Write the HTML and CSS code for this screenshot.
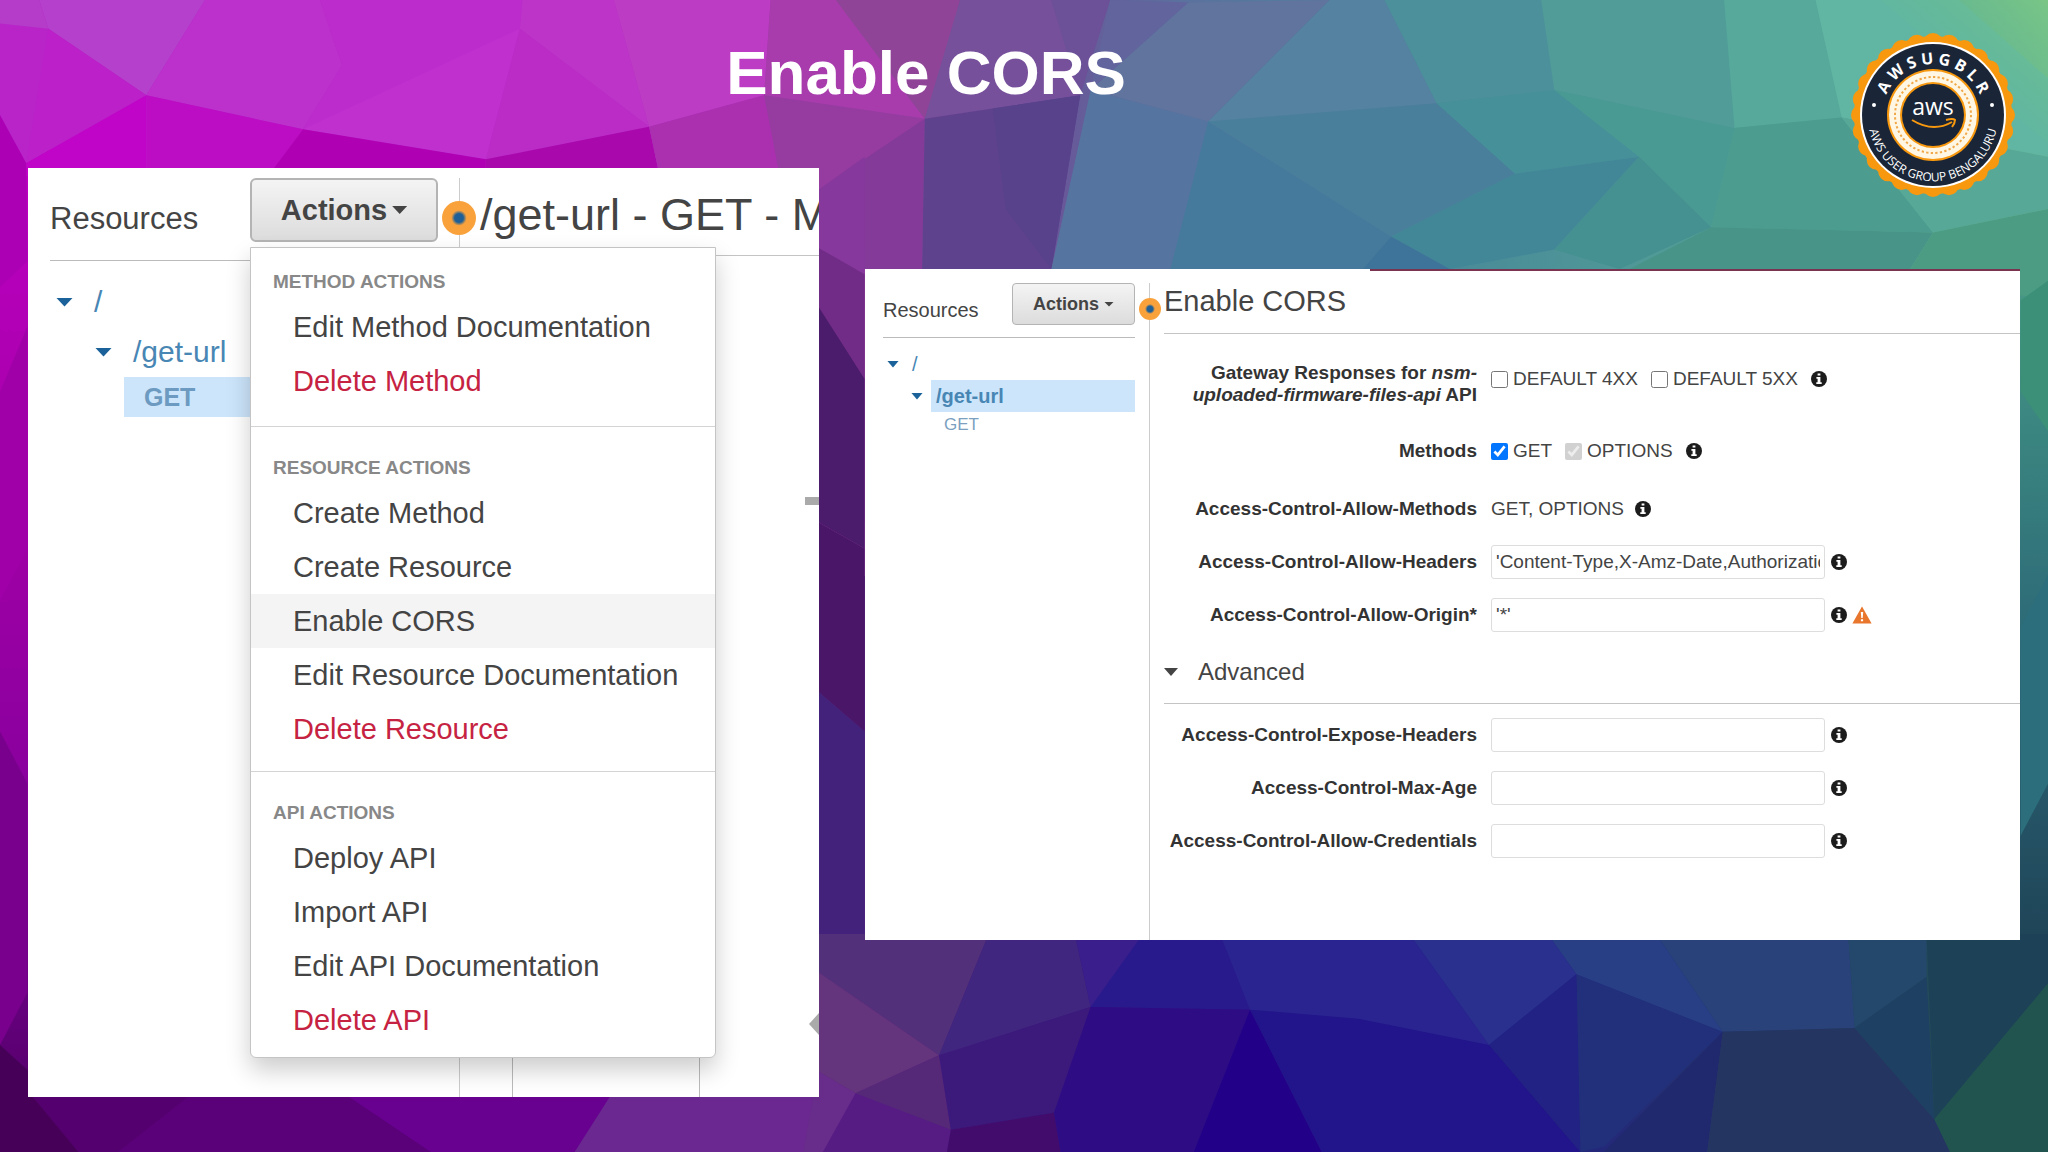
FILE: index.html
```html
<!DOCTYPE html>
<html lang="en">
<head>
    <meta charset="UTF-8">
    <meta name="viewport" content="width=device-width, initial-scale=1.0">
    <title>Enable CORS</title>
    <link rel="stylesheet" href="styles.css">
</head>
<body>
    <!-- Low poly backdrop -->
    <svg class="backdrop" viewBox="0 0 1568 882" preserveAspectRatio="none" aria-hidden="true">
        <defs>
            <linearGradient id="top" x1="0" x2="1" y1="0" y2="0">
                <stop offset="0" stop-color="#b520c8"/>
                <stop offset="0.3" stop-color="#b82cc4"/>
                <stop offset="0.42" stop-color="#9a40a4"/>
                <stop offset="0.5" stop-color="#6c5098"/>
                <stop offset="0.58" stop-color="#5a729e"/>
                <stop offset="0.72" stop-color="#4a8c98"/>
                <stop offset="0.9" stop-color="#56a896"/>
                <stop offset="1" stop-color="#6cbc8c"/>
            </linearGradient>
            <linearGradient id="bottom" x1="0" x2="1" y1="0" y2="0">
                <stop offset="0" stop-color="#46005e"/>
                <stop offset="0.2" stop-color="#66008e"/>
                <stop offset="0.38" stop-color="#6a2c8a"/>
                <stop offset="0.5" stop-color="#3c1880"/>
                <stop offset="0.7" stop-color="#24168c"/>
                <stop offset="0.9" stop-color="#24425f"/>
                <stop offset="1" stop-color="#205450"/>
            </linearGradient>
            <linearGradient id="left" x1="0" x2="0" y1="0" y2="1">
                <stop offset="0" stop-color="#c000c4"/>
                <stop offset="0.35" stop-color="#a400a8"/>
                <stop offset="0.7" stop-color="#86009c"/>
                <stop offset="1" stop-color="#52006a"/>
            </linearGradient>
            <linearGradient id="right" x1="0" x2="0" y1="0" y2="1">
                <stop offset="0" stop-color="#4e9f88"/>
                <stop offset="0.3" stop-color="#3a8480"/>
                <stop offset="0.6" stop-color="#2c6876"/>
                <stop offset="1" stop-color="#1f4458"/>
            </linearGradient>
            <linearGradient id="glow" x1="0" x2="1" y1="1" y2="0">
                <stop offset="0.3" stop-color="#5cb49c" stop-opacity="0"/>
                <stop offset="1" stop-color="#7cc884" stop-opacity="0.8"/>
            </linearGradient>
        </defs>
        <rect width="1568" height="441" fill="url(#top)"/>
        <rect y="441" width="1568" height="441" fill="url(#bottom)"/>
        <rect y="110" width="40" height="740" fill="url(#left)"/>
        <rect x="1530" y="170" width="38" height="550" fill="url(#right)"/>

        <!-- top left, magenta -->
        <polygon points="0,0 30,0 37,22 0,75" fill="#b43cc8"/>
        <polygon points="30,0 157,0 112,73 37,22" fill="#b440cc"/>
        <polygon points="0,18 37,22 112,73 20,125 0,88" fill="#b824c8"/>
        <polygon points="37,22 112,73 20,125" fill="#bc20c8"/>
        <polygon points="157,0 245,0 262,50 232,99 112,73" fill="#bc30cc"/>
        <polygon points="245,0 400,0 398,22 372,122 232,99 262,50" fill="#bc2ccc"/>
        <polygon points="398,22 372,122 232,99" fill="#bf30cf"/>
        <polygon points="400,0 470,0 497,97 398,22" fill="#bc34c8"/>
        <polygon points="398,22 497,97 372,122" fill="#bb2cc6"/>
        <polygon points="470,0 590,0 585,73 497,97" fill="#bc3cc4"/>
        <polygon points="112,73 20,125 10,135 112,135" fill="#c004c8"/>
        <polygon points="112,73 232,99 205,135 112,135" fill="#bc0cc4"/>
        <polygon points="232,99 372,122 372,135 205,135" fill="#b000b4"/>
        <polygon points="497,97 372,122 372,135 505,135" fill="#a808ac"/>
        <polygon points="497,97 585,73 600,135 505,135" fill="#aa30b0"/>
        <polygon points="0,88 20,125 21,200 0,220" fill="#ac00b4"/>
        <polygon points="0,300 21,250 21,420 0,460" fill="#a000a8"/>
        <polygon points="0,560 21,600 21,760 0,800" fill="#78008c"/>

        <!-- middle, violet to blue -->
        <polygon points="590,0 640,0 708,91 585,73" fill="#a83cac"/>
        <polygon points="640,0 735,0 722,60 708,91" fill="#904498"/>
        <polygon points="585,73 708,91 630,145 596,130" fill="#963ca0"/>
        <polygon points="735,0 805,0 827,73 708,91" fill="#76509a"/>
        <polygon points="805,0 850,0 827,73" fill="#6c5098"/>
        <polygon points="708,91 706,206 627,206 627,145" fill="#843a98"/>
        <polygon points="708,91 827,73 805,206 706,206" fill="#5e428e"/>
        <polygon points="760,83 827,73 805,206 770,160" fill="#58428c"/>
        <polygon points="850,0 910,2 835,69" fill="#62649e"/>
        <polygon points="910,2 1018,0 925,93 835,69" fill="#60749e"/>
        <polygon points="835,69 925,93 900,206 805,206" fill="#5674a0"/>
        <polygon points="925,93 1065,181 1040,210 895,210" fill="#467a9c"/>
        <polygon points="1018,0 1060,0 1100,79 1000,110 925,93" fill="#5482a0"/>
        <polygon points="925,93 1100,79 1160,133 1065,181" fill="#4a7f9c"/>

        <!-- top right, teal -->
        <polygon points="1060,0 1180,0 1190,69 1100,79" fill="#4c909c"/>
        <polygon points="1180,0 1320,0 1328,98 1190,69" fill="#519c99"/>
        <polygon points="1100,79 1190,69 1255,120 1160,133" fill="#46909a"/>
        <polygon points="1190,69 1328,98 1310,174 1255,120" fill="#4a9a94"/>
        <polygon points="1160,133 1255,120 1190,191 1110,206 1065,181" fill="#428798"/>
        <polygon points="1255,120 1310,174 1240,206 1190,191" fill="#459090"/>
        <polygon points="1065,181 1110,206 1040,210" fill="#3f749a"/>
        <polygon points="1320,0 1390,0 1410,90 1328,98" fill="#56a99b"/>
        <polygon points="1390,0 1500,0 1568,60 1568,120 1410,90" fill="#60b6a2"/>
        <polygon points="1440,0 1568,0 1568,110" fill="url(#glow)"/>
        <polygon points="1328,98 1410,90 1480,178 1310,174" fill="#4c9c90"/>
        <polygon points="1410,90 1568,120 1568,160 1480,178" fill="#58a898"/>
        <polygon points="1310,174 1480,178 1460,210 1240,210" fill="#489488"/>
        <polygon points="1480,178 1568,160 1568,230 1460,210" fill="#4c9c84"/>
        <polygon points="1547,230 1568,215 1568,330 1547,300" fill="#3c9078"/>
        <polygon points="1547,480 1568,440 1568,600 1547,640" fill="#2c6e7c"/>

        <!-- strip between the panels -->
        <polygon points="627,145 662,120 662,210 627,190" fill="#86389c"/>
        <polygon points="627,190 662,210 662,290 627,235" fill="#702c86"/>
        <polygon points="627,235 662,290 662,420 627,400" fill="#4c1c6c"/>
        <polygon points="627,400 662,420 662,560 627,530" fill="#4a1668"/>
        <polygon points="627,530 662,560 662,722 627,722" fill="#42227a"/>

        <!-- bottom -->
        <polygon points="0,800 90,882 0,882" fill="#460058"/>
        <polygon points="21,835 150,835 90,882 60,882" fill="#54006e"/>
        <polygon points="150,835 260,835 330,882 90,882" fill="#5a0078"/>
        <polygon points="260,835 470,835 440,882 330,882" fill="#680090"/>
        <polygon points="470,835 627,835 640,882 440,882" fill="#6a2890"/>
        <polygon points="627,715 757,715 719,808 626,744" fill="#52307a"/>
        <polygon points="626,744 719,808 655,837 626,820" fill="#64347c"/>
        <polygon points="626,820 655,837 640,882 615,882" fill="#682c8a"/>
        <polygon points="655,837 728,865 725,882 630,882" fill="#561c84"/>
        <polygon points="655,837 719,808 728,865" fill="#562878"/>
        <polygon points="757,715 823,715 835,771 719,808" fill="#40267e"/>
        <polygon points="719,808 835,771 807,852 728,865" fill="#3c1a7c"/>
        <polygon points="728,865 807,852 812,882 725,882" fill="#420c6c"/>
        <polygon points="823,715 875,715 850,771 835,771" fill="#3a1e8c"/>
        <polygon points="875,715 934,715 957,773 835,771" fill="#281a8c"/>
        <polygon points="835,771 957,773 914,882 812,882 807,852" fill="#2e0c84"/>
        <polygon points="957,773 1012,882 914,882" fill="#220088"/>
        <polygon points="934,715 1079,715 1140,800 957,773" fill="#2a2490"/>
        <polygon points="1079,715 1185,715 1207,746 1140,800" fill="#2a308e"/>
        <polygon points="957,773 1040,780 1140,800 1210,882 1012,882" fill="#22148a"/>
        <polygon points="1140,800 1207,746 1210,882" fill="#222284"/>
        <polygon points="1207,746 1319,790 1228,878 1210,882" fill="#22307c"/>
        <polygon points="1319,790 1307,882 1228,882" fill="#20286e"/>
        <polygon points="1185,715 1268,715 1319,790 1207,746" fill="#283f86"/>
        <polygon points="1268,715 1415,715 1420,787 1319,790" fill="#29437a"/>
        <polygon points="1319,790 1420,787 1481,857 1493,882 1307,882" fill="#253562"/>
        <polygon points="1415,715 1475,715 1475,748 1420,787" fill="#23486c"/>
        <polygon points="1420,787 1475,748 1481,857" fill="#1e4062"/>
        <polygon points="1475,715 1568,715 1568,753 1481,857" fill="#1d4258"/>
        <polygon points="1568,753 1568,882 1493,882 1481,857" fill="#22544f"/>
    </svg>

    <!-- Icons shared by both panels -->
    <svg class="sprite" aria-hidden="true">
        <symbol id="info" viewBox="0 0 16 16">
            <circle cx="8" cy="8" r="8" fill="#1c1c1c"/>
            <path fill="#fff" d="M6.6 2.4h2.8v2.2H6.6zM5.4 6h4v5.2h1.3V13H5.3v-1.8h1.3V7.8H5.4z"/>
        </symbol>
        <symbol id="warning" viewBox="0 0 20 18">
            <path fill="#e8762c" d="M10 0.5 19.6 17.5H0.4z"/>
            <path fill="#fff" d="M8.8 6h2.4l-.5 6H9.3zM8.9 13.2h2.2v2.1H8.9z"/>
        </symbol>
    </svg>

    <header class="slide-header">
        <h1>Enable CORS</h1>
        <svg class="badge" viewBox="-82 -82 164 164" role="img" aria-label="AWS User Group Bengaluru">
            <defs>
                <path id="arc-top" d="M-51,0A51,51 0 0 1 51,0"/>
                <path id="arc-bottom" d="M-64,-10A65,65 0 1 0 64,-10"/>
            </defs>
            <circle r="79" fill="#f7980f"/>
            <circle class="scallop" r="72" pathLength="28"/>
            <circle r="73" fill="#fff"/>
            <circle r="71" fill="#1a2638"/>
            <circle r="46" fill="#f7980f"/>
            <circle r="44" fill="#fff6e4"/>
            <circle class="beads" r="38" pathLength="52"/>
            <circle r="33" fill="#f7980f"/>
            <circle r="31" fill="#1a2638"/>
            <circle cx="-59" cy="-10" r="2" fill="#fff"/>
            <circle cx="59" cy="-10" r="2" fill="#fff"/>
            <text class="badge-top"><textPath href="#arc-top" startOffset="50%">A W S U G B L R</textPath></text>
            <text class="badge-bottom"><textPath href="#arc-bottom" startOffset="50%">AWS USER GROUP BENGALURU</textPath></text>
            <text class="badge-aws" y="0">aws</text>
            <path d="M-21,5Q0,18 19,7" fill="none" stroke="#f7980f" stroke-width="2"/>
            <path d="M13,5Q20,3 22,5Q22,8 19,12" fill="none" stroke="#f7980f" stroke-width="2"/>
        </svg>
    </header>

    <main class="slide">
        <section class="console console-menu">
            <aside class="sidebar">
                <div class="sidebar-header">
                    <h2>Resources</h2>
                    <button type="button" class="actions">Actions<span class="caret"></span></button>
                    <div class="dropdown">
                        <div class="group">
                            <h3>METHOD ACTIONS</h3>
                            <a href="#">Edit Method Documentation</a>
                            <a href="#" class="danger">Delete Method</a>
                        </div>
                        <div class="group">
                            <h3>RESOURCE ACTIONS</h3>
                            <a href="#">Create Method</a>
                            <a href="#">Create Resource</a>
                            <a href="#" class="active">Enable CORS</a>
                            <a href="#">Edit Resource Documentation</a>
                            <a href="#" class="danger">Delete Resource</a>
                        </div>
                        <div class="group">
                            <h3>API ACTIONS</h3>
                            <a href="#">Deploy API</a>
                            <a href="#">Import API</a>
                            <a href="#">Edit API Documentation</a>
                            <a href="#" class="danger">Delete API</a>
                        </div>
                    </div>
                </div>
                <ul class="tree">
                    <li><span class="caret"></span><a href="#">/</a></li>
                    <li class="child"><span class="caret"></span><a href="#">/get-url</a></li>
                    <li class="leaf"><a href="#" class="selected">GET</a></li>
                </ul>
                <span class="handle"></span>
            </aside>
            <div class="content">
                <h2 class="content-title">/get-url - GET - M</h2>
                <div class="diagram">
                    <span class="box"></span>
                    <span class="dash"></span>
                    <svg class="arrow" viewBox="0 0 11 22"><path d="M11,0 1,11 11,22z" fill="#aaa"/></svg>
                </div>
            </div>
        </section>

        <section class="console console-form">
            <aside class="sidebar">
                <div class="sidebar-header">
                    <h2>Resources</h2>
                    <button type="button" class="actions">Actions<span class="caret"></span></button>
                </div>
                <ul class="tree">
                    <li><span class="caret"></span><a href="#">/</a></li>
                    <li class="child"><span class="caret"></span><a href="#" class="selected">/get-url</a></li>
                    <li class="leaf"><a href="#">GET</a></li>
                </ul>
                <span class="handle"></span>
            </aside>
            <form class="content">
                <h2 class="content-title">Enable CORS</h2>
                <div class="field field-responses">
                    <span class="label">Gateway Responses for <em>nsm-uploaded-firmware-files-api</em> API</span>
                    <div class="control">
                        <label><input type="checkbox">DEFAULT 4XX</label>
                        <label><input type="checkbox">DEFAULT 5XX</label>
                        <svg class="info"><use href="#info"/></svg>
                    </div>
                </div>
                <div class="field field-methods">
                    <span class="label">Methods</span>
                    <div class="control">
                        <label><input type="checkbox" checked>GET</label>
                        <label><input type="checkbox" checked disabled>OPTIONS</label>
                        <svg class="info"><use href="#info"/></svg>
                    </div>
                </div>
                <div class="field">
                    <span class="label">Access-Control-Allow-Methods</span>
                    <div class="control">
                        <span>GET, OPTIONS</span>
                        <svg class="info"><use href="#info"/></svg>
                    </div>
                </div>
                <div class="field">
                    <label class="label" for="allow-headers">Access-Control-Allow-Headers</label>
                    <div class="control">
                        <input type="text" id="allow-headers" value="'Content-Type,X-Amz-Date,Authorization">
                        <svg class="info"><use href="#info"/></svg>
                    </div>
                </div>
                <div class="field">
                    <label class="label" for="allow-origin">Access-Control-Allow-Origin*</label>
                    <div class="control">
                        <input type="text" id="allow-origin" value="'*'">
                        <svg class="info"><use href="#info"/></svg>
                        <svg class="warning"><use href="#warning"/></svg>
                    </div>
                </div>
                <details open>
                    <summary><span class="caret"></span>Advanced</summary>
                    <div class="field">
                        <label class="label" for="expose-headers">Access-Control-Expose-Headers</label>
                        <div class="control">
                            <input type="text" id="expose-headers">
                            <svg class="info"><use href="#info"/></svg>
                        </div>
                    </div>
                    <div class="field">
                        <label class="label" for="max-age">Access-Control-Max-Age</label>
                        <div class="control">
                            <input type="text" id="max-age">
                            <svg class="info"><use href="#info"/></svg>
                        </div>
                    </div>
                    <div class="field">
                        <label class="label" for="allow-credentials">Access-Control-Allow-Credentials</label>
                        <div class="control">
                            <input type="text" id="allow-credentials">
                            <svg class="info"><use href="#info"/></svg>
                        </div>
                    </div>
                </details>
            </form>
        </section>
    </main>
</body>
</html>
```
FILE: styles.css
```css
* {
    margin: 0;
    padding: 0;
    box-sizing: border-box;
}

body {
    position: relative;
    min-height: 100vh;
    font-family: "Liberation Sans", Arial, sans-serif;
    color: #444;
    background: #3c1880;
}

a {
    color: inherit;
    text-decoration: none;
}

.backdrop {
    position: absolute;
    inset: 0;
    width: 100%;
    height: 100%;
    z-index: -1;
}

.sprite {
    position: absolute;
    width: 0;
    height: 0;
}

/* Slide header */
.slide-header {
    position: relative;
    padding: 0 196px 22px 0;
    text-align: center;
}

.slide-header h1 {
    font-size: 62px;
    line-height: 146px;
    color: #fff;
}

.badge {
    position: absolute;
    top: 33px;
    right: 33px;
    width: 164px;
    height: 164px;
    fill: #fff;
    font-family: "Open Sans", sans-serif;
    text-anchor: middle;
}

.scallop {
    fill: none;
    stroke: #f7980f;
    stroke-width: 20;
    stroke-linecap: round;
    stroke-dasharray: 0 1;
}

.beads {
    fill: none;
    stroke: #f0a848;
    stroke-width: 2;
    stroke-dasharray: 0.5 0.5;
}

.badge-top {
    font-size: 16px;
    font-weight: bold;
}

.badge-bottom {
    font-size: 12px;
}

.badge-aws {
    font-size: 23px;
}

/* Panels */
.slide {
    display: grid;
    grid-template-columns: 791fr 1155fr;
    gap: 46px;
    align-items: start;
    padding: 0 28px 55px;
}

.console {
    display: flex;
    overflow: hidden;
    background: #fff;
}

.sidebar {
    position: relative;
    flex: none;
    border-right: 1px solid #ccc;
    z-index: 1;
}

.sidebar-header {
    position: relative;
    display: flex;
    justify-content: space-between;
    align-items: flex-start;
    border-bottom: 1px solid #bbb;
}

.sidebar-header h2,
.content-title {
    font-weight: normal;
}

.actions {
    display: flex;
    align-items: center;
    justify-content: center;
    gap: 5px;
    font-family: inherit;
    font-weight: bold;
    color: #444;
    background: linear-gradient(#f4f4f4, #dcdcdc);
    border: 1px solid #b4b4b4;
}

.caret {
    flex: none;
    width: 12px;
    height: 7px;
    background: #1a6299;
    clip-path: polygon(0 0, 100% 0, 50% 100%);
}

.actions .caret,
summary .caret {
    background: #444;
}

.tree {
    list-style: none;
    color: #4886b4;
}

.tree li {
    display: flex;
    align-items: center;
}

.tree a {
    flex: 1;
}

.tree .selected {
    font-weight: bold;
    background: #cce5fb;
}

.handle {
    position: absolute;
    border-radius: 50%;
    background: radial-gradient(#1d5f96 0 18%, #f9a23c 32%);
}

.content {
    flex: 1;
    min-width: 0;
    display: flex;
    flex-direction: column;
}

.content-title {
    white-space: nowrap;
    border-bottom: 1px solid #c4c4c4;
}

/* Panel with the open menu */
.console-menu {
    min-height: 929px;
}

.console-menu .sidebar {
    width: 432px;
    margin-top: 10px;
    padding-left: 22px;
}

.console-menu .sidebar-header h2 {
    font-size: 31px;
    line-height: 82px;
}

.console-menu .actions {
    width: 188px;
    height: 64px;
    margin-right: 21px;
    font-size: 29px;
    border-width: 2px;
    border-radius: 6px;
}

.console-menu .caret {
    width: 17px;
    height: 9px;
}

.console-menu .actions .caret {
    width: 15px;
    height: 8px;
}

.dropdown {
    position: absolute;
    top: 69px;
    left: 200px;
    width: 466px;
    background: #fff;
    border: 1px solid #c4c4c4;
    border-radius: 0 0 6px 6px;
    box-shadow: 0 12px 24px rgba(0, 0, 0, 0.2);
}

.group {
    padding: 23px 0 15px;
}

.group:first-child {
    padding: 16px 0 18px;
}

.group:last-child {
    padding-bottom: 10px;
}

.group + .group {
    border-top: 1px solid #d4d4d4;
}

.group h3 {
    padding-left: 22px;
    font-size: 19px;
    line-height: 36px;
    color: #888;
}

.group a {
    display: block;
    padding-left: 42px;
    font-size: 29px;
    line-height: 54px;
}

.group .active {
    background: #f4f4f4;
}

.group .danger {
    color: #c62342;
}

.console-menu .tree {
    padding-top: 16px;
    font-size: 30px;
    line-height: 50px;
}

.console-menu .tree li {
    gap: 21px;
    padding-left: 6px;
}

.console-menu .tree .child {
    padding-left: 45px;
}

.console-menu .tree .leaf {
    padding-left: 74px;
    font-size: 25px;
    line-height: 40px;
}

.console-menu .leaf a {
    padding-left: 20px;
    color: #6c9ac0;
}

.console-menu .handle {
    top: 23px;
    right: -17px;
    width: 34px;
    height: 34px;
}

.console-menu .content {
    padding: 10px 0 0 20px;
}

.console-menu .content-title {
    padding-bottom: 3px;
    font-size: 45px;
    line-height: 74px;
}

.diagram {
    position: relative;
    flex: 1;
}

.box {
    position: absolute;
    top: 600px;
    bottom: 0;
    left: 32px;
    width: 188px;
    border: 1px solid #bbb;
    border-width: 0 1px;
}

.dash {
    position: absolute;
    top: 241px;
    right: 0;
    width: 14px;
    height: 8px;
    background: #aaa;
}

.arrow {
    position: absolute;
    top: 757px;
    right: 0;
    width: 11px;
    height: 22px;
}

/* Panel with the form */
.console-form {
    min-height: 671px;
    margin-top: 101px;
    background: linear-gradient(#7a3450, #7a3450) right top / 650px 2px no-repeat #fff;
}

.console-form .sidebar {
    width: 285px;
    margin-top: 14px;
    padding: 0 14px 0 18px;
}

.console-form .sidebar-header h2 {
    font-size: 20px;
    line-height: 54px;
}

.console-form .actions {
    width: 123px;
    height: 42px;
    font-size: 18px;
    border-radius: 4px;
}

.console-form .actions .caret {
    width: 10px;
    height: 5px;
}

.console-form .tree {
    padding-top: 10px;
    font-size: 20px;
    line-height: 32px;
}

.console-form .tree li {
    gap: 8px;
    padding-left: 4px;
}

.console-form .tree a {
    padding-left: 5px;
}

.console-form .tree .child {
    padding-left: 28px;
}

.console-form .tree .leaf {
    padding-left: 56px;
    font-size: 17px;
    line-height: 26px;
    color: #7ba0c0;
}

.console-form .handle {
    top: 15px;
    right: -12px;
    width: 22px;
    height: 22px;
}

.console-form .content {
    padding-left: 14px;
    font-size: 19px;
}

.console-form .content-title {
    margin-bottom: 28px;
    font-size: 29px;
    line-height: 64px;
}

.field {
    display: grid;
    grid-template-columns: 313px 1fr;
    column-gap: 14px;
    align-items: center;
    margin-bottom: 19px;
}

.field-responses {
    align-items: start;
    margin-bottom: 28px;
}

.field-methods {
    margin-bottom: 24px;
}

.label {
    font-weight: bold;
    line-height: 22px;
    text-align: right;
    color: #333;
}

.control {
    display: flex;
    align-items: center;
    height: 34px;
}

.control label {
    display: flex;
    align-items: center;
    gap: 5px;
    margin-right: 13px;
}

.control span {
    margin-right: 11px;
}

.control input[type="checkbox"] {
    width: 17px;
    height: 17px;
}

.control input[type="text"] {
    width: 334px;
    height: 34px;
    margin-right: 6px;
    padding: 0 4px;
    font-family: inherit;
    font-size: 19px;
    color: #444;
    background: #fff;
    border: 1px solid #ddd;
    border-radius: 3px;
}

.info {
    width: 16px;
    height: 16px;
}

.warning {
    width: 20px;
    height: 18px;
    margin-left: 5px;
}

summary {
    display: flex;
    align-items: center;
    gap: 20px;
    height: 53px;
    margin-bottom: 14px;
    padding-bottom: 10px;
    font-size: 24px;
    list-style: none;
    border-bottom: 1px solid #c4c4c4;
}

summary .caret {
    width: 14px;
    height: 8px;
}
```
